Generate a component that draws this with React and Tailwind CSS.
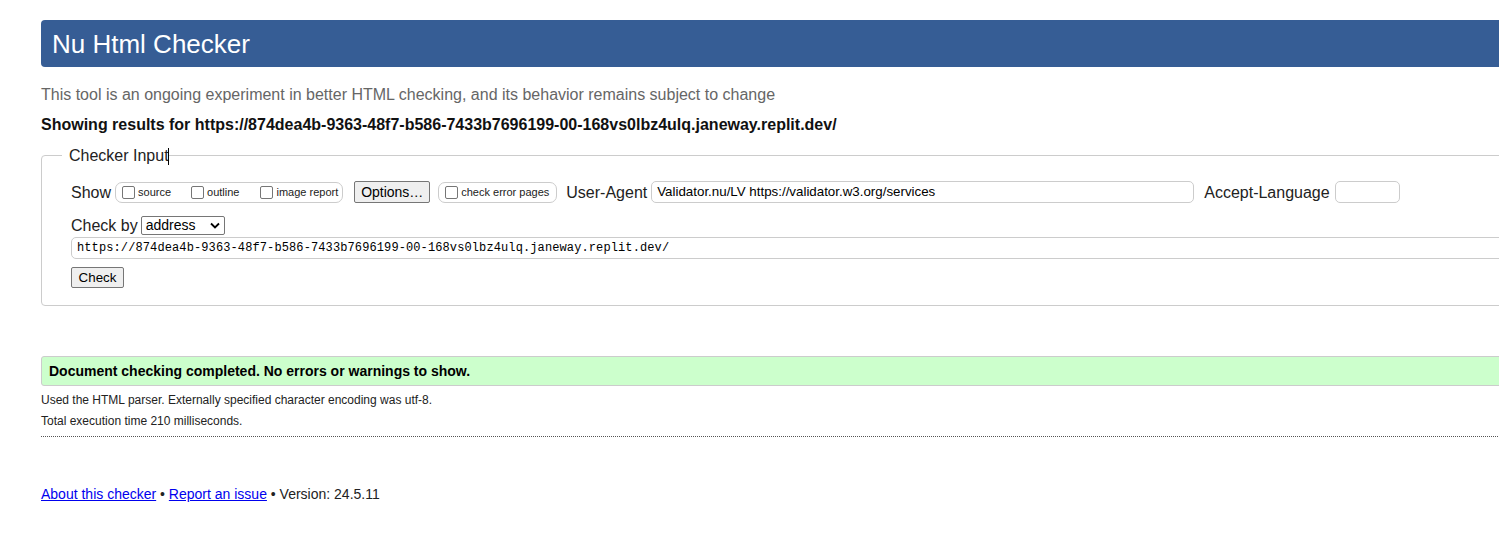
import React from "react";

const Box = () => (
  <span className="inline-block w-[13px] h-[13px] border border-[#767676] rounded-[2px] bg-white shrink-0" />
);

export default function App() {
  const url = "https://874dea4b-9363-48f7-b586-7433b7696199-00-168vs0lbz4ulq.janeway.replit.dev/";
  return (
    <div className="w-full h-[557px] overflow-hidden bg-white text-[#222] font-['Liberation_Sans',Arial,sans-serif]">
      <div className="w-[1600px] pl-[41px] pt-[20px]">
        <div className="h-[47px] bg-[#365d95] rounded-[4px] flex items-center pl-[11px]">
          <h1 className="text-white text-[26px] leading-none font-normal">Nu Html Checker</h1>
        </div>
        <p className="mt-[18px] text-[16px] leading-[19px] text-[#666]">
          This tool is an ongoing experiment in better HTML checking, and its behavior remains subject to change
        </p>
        <p className="mt-[11px] text-[16px] leading-[19px] font-bold text-[#111]">
          Showing results for {url}
        </p>
        <fieldset className="mt-[12px] border border-[#ccc] rounded-[4px] pl-[20px] pb-[17px]">
          <legend className="pl-[7px] pr-0 text-[16px] leading-[19px] text-[#222]">
            Checker Input<span className="inline-block w-[1px] h-[17px] bg-black align-middle ml-[-1px]" />
          </legend>
          <div className="pl-[9px] pt-[16px]">
            <div className="flex items-center h-[22px] text-[16px]">
              <span className="mr-[4px] leading-[19px]">Show</span>
              <span className="flex items-center h-[21px] border border-[#ccc] rounded-[7px] pl-[6px] pr-[4px] text-[11px]">
                <Box />
                <span className="ml-[3px] mr-[20px]">source</span>
                <Box />
                <span className="ml-[3px] mr-[21px]">outline</span>
                <Box />
                <span className="ml-[3px]">image report</span>
              </span>
              <span className="ml-[11px] h-[22px] w-[76px] flex items-center justify-center bg-[#efefef] border border-[#767676] rounded-[2px] text-[14px] text-black">
                Options…
              </span>
              <span className="ml-[8px] flex items-center h-[21px] border border-[#ccc] rounded-[7px] pl-[6px] pr-[7px] text-[11px]">
                <Box />
                <span className="ml-[3px]">check error pages</span>
              </span>
              <span className="ml-[9px] leading-[19px]">User-Agent</span>
              <span className="ml-[4px] w-[543px] h-[22px] border border-[#ccc] rounded-[5px] flex items-center pl-[5px] text-[13.33px] text-black">
                Validator.nu/LV https://validator.w3.org/services
              </span>
              <span className="ml-[10px] leading-[19px]">Accept-Language</span>
              <span className="ml-[5px] w-[65px] h-[22px] border border-[#ccc] rounded-[5px]" />
            </div>
            <div className="flex items-center h-[20px] mt-[12px] text-[16px]">
              <span className="leading-[19px]">Check by</span>
              <span className="ml-[3px] w-[84px] h-[19px] border border-[#767676] rounded-[2px] flex items-center justify-between pl-[4px] pr-[4px] text-[14px] text-black">
                address
                <svg width="10" height="7" viewBox="0 0 10 7">
                  <path d="M1 1.5 L5 5.5 L9 1.5" fill="none" stroke="#000" strokeWidth="1.8" />
                </svg>
              </span>
            </div>
            <div className="mt-[2px] h-[22px] border border-[#ccc] rounded-[5px] flex items-center pl-[5px] font-['Liberation_Mono','DejaVu_Sans_Mono',monospace] text-[12px] tracking-[0.11px] text-black">
              {url}
            </div>
            <div className="mt-[8px] w-[53px] h-[21px] flex items-center justify-center bg-[#efefef] border border-[#767676] rounded-[2px] text-[13.33px] text-black">
              Check
            </div>
          </div>
        </fieldset>
        <div className="mt-[50px] h-[30px] bg-[#ccffcc] border border-[#ccc] rounded-[3px] flex items-center pl-[7px] text-[14px] font-bold text-black">
          Document checking completed. No errors or warnings to show.
        </div>
        <p className="mt-[7px] text-[12px] leading-[14px]">
          Used the HTML parser. Externally specified character encoding was utf-8.
        </p>
        <p className="mt-[7px] text-[12px] leading-[14px]">Total execution time 210 milliseconds.</p>
        <div className="mt-[8px] border-t border-dotted border-[#555]" />
        <p className="mt-[49px] text-[14px] leading-[16px]">
          <a className="text-[#0000ee] underline" href="#">About this checker</a> •{" "}
          <a className="text-[#0000ee] underline" href="#">Report an issue</a> • Version: 24.5.11
        </p>
      </div>
    </div>
  );
}
